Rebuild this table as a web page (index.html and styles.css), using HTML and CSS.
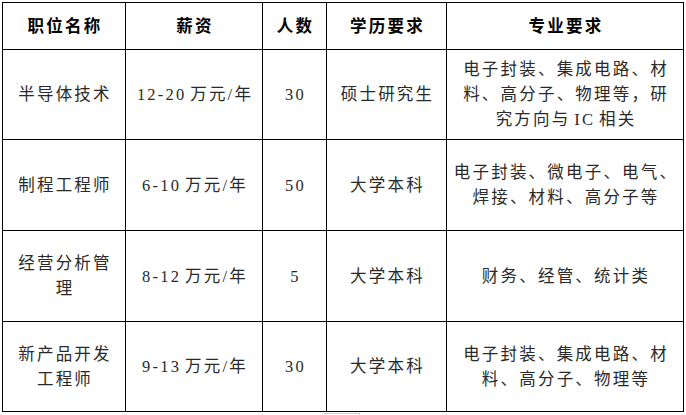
FILE: index.html
```html
<!DOCTYPE html>
<html lang="zh-CN">
<head>
<meta charset="utf-8">
<title>招聘岗位</title>
<link rel="stylesheet" href="styles.css">
</head>
<body>
<table class="jobs">
  <colgroup>
    <col class="c-name">
    <col class="c-pay">
    <col class="c-num">
    <col class="c-edu">
    <col class="c-major">
  </colgroup>
  <thead>
    <tr class="head">
      <th>职位名称</th>
      <th>薪资</th>
      <th>人数</th>
      <th>学历要求</th>
      <th>专业要求</th>
    </tr>
  </thead>
  <tbody>
    <tr class="r1">
      <td>半导体技术</td>
      <td>12-20 万元/年</td>
      <td>30</td>
      <td>硕士研究生</td>
      <td>电子封装、集成电路、材<br>料、高分子、物理等，研<br>究方向与 IC 相关</td>
    </tr>
    <tr class="r2">
      <td>制程工程师</td>
      <td>6-10 万元/年</td>
      <td>50</td>
      <td>大学本科</td>
      <td>电子封装、微电子、电气、<br>焊接、材料、高分子等</td>
    </tr>
    <tr class="r3">
      <td>经营分析管<br>理</td>
      <td>8-12 万元/年</td>
      <td>5</td>
      <td>大学本科</td>
      <td>财务、经管、统计类</td>
    </tr>
    <tr class="r4">
      <td>新产品开发<br>工程师</td>
      <td>9-13 万元/年</td>
      <td>30</td>
      <td>大学本科</td>
      <td>电子封装、集成电路、材<br>料、高分子、物理等</td>
    </tr>
  </tbody>
</table>
<div class="next-frame"></div>
</body>
</html>
```
FILE: styles.css
```css
html, body {
  margin: 0;
  padding: 0;
  background: #ffffff;
}

.jobs {
  margin: 2px 0 0 2px;
  border-collapse: collapse;
  table-layout: fixed;
  width: 682px;
  font-family: "Liberation Serif", "Noto Sans CJK SC", serif;
  font-size: 16.5px;
  letter-spacing: 2.2px;
  word-spacing: -2.5px;
  line-height: 25px;
  color: #2a2a2a;
}

.c-name { width: 123px; }
.c-pay { width: 137px; }
.c-num { width: 64px; }
.c-edu { width: 120px; }
.c-major { width: 237px; }

.jobs th,
.jobs td {
  border: 1px solid #000000;
  text-align: center;
  vertical-align: middle;
  padding: 0 0 0 2px;
  white-space: nowrap;
}

.jobs th {
  font-weight: 700;
  color: #000000;
  height: 46px;
}

.r1 td { height: 89px; }
.r2 td { height: 90px; }
.r3 td { height: 90px; }
.r4 td { height: 89px; }

.next-frame {
  margin: 1px 0 0 324px;
  width: 34px;
  height: 3px;
  border: 1px solid #cfcfcf;
  border-bottom: none;
}
```
